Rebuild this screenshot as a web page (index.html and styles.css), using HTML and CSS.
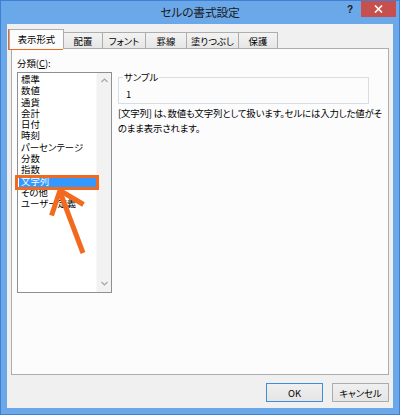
FILE: index.html
```html
<!DOCTYPE html>
<html lang="ja">
<head>
<meta charset="utf-8">
<title>セルの書式設定</title>
<link rel="stylesheet" href="styles.css">
</head>
<body>
<div class="window">
  <div class="titlebar">
    <div></div>
    <div class="title">セルの書式設定</div>
    <div class="controls">
      <span class="help">?</span>
      <span class="close"><svg width="9" height="8" viewBox="0 0 9 8"><path d="M1 0.5 L8 7.5 M8 0.5 L1 7.5" stroke="#fff" stroke-width="1.6" fill="none"/></svg></span>
    </div>
  </div>
  <div class="client">
    <div class="tabs">
      <div class="tab active t1">表示形式</div>
      <div class="tab t2">配置</div>
      <div class="tab t3">フォント</div>
      <div class="tab t4">罫線</div>
      <div class="tab t5">塗りつぶし</div>
      <div class="tab t6">保護</div>
    </div>
    <div class="panel">
      <div class="left">
        <div class="label">分類(<u>C</u>):</div>
        <div class="listbox">
          <ul class="items">
            <li>標準</li>
            <li>数値</li>
            <li>通貨</li>
            <li>会計</li>
            <li>日付</li>
            <li>時刻</li>
            <li>パーセンテージ</li>
            <li>分数</li>
            <li>指数</li>
            <li class="selected">文字列</li>
            <li>その他</li>
            <li>ユーザー定義</li>
          </ul>
          <div class="scrollbar">
            <svg width="7" height="5" viewBox="0 0 7 5"><path d="M0.5 4 L3.5 1 L6.5 4" stroke="#a6a6a6" stroke-width="1.2" fill="none"/></svg>
            <svg width="7" height="5" viewBox="0 0 7 5"><path d="M0.5 1 L3.5 4 L6.5 1" stroke="#a6a6a6" stroke-width="1.2" fill="none"/></svg>
          </div>
        </div>
      </div>
      <div class="right">
        <fieldset class="sample">
          <legend>サンプル</legend>
          <div class="sample-value">1</div>
        </fieldset>
        <p class="desc">[文字列] は、数値も文字列として扱います。セルには入力した値がそ<br>のまま表示されます。</p>
      </div>
    </div>
    <div class="buttons">
      <button class="btn default">OK</button>
      <button class="btn">キャンセル</button>
    </div>
  </div>
  <svg class="annot" width="400" height="415" viewBox="0 0 400 415">
    <rect x="9.5" y="30.5" width="52" height="18" fill="none" stroke="#f26a1e" stroke-width="3"/>
    <rect x="16.5" y="176.5" width="81" height="12" fill="none" stroke="#f26a1e" stroke-width="3"/>
    <path d="M60 192 L83 253" stroke="#f26a1e" stroke-width="5" fill="none"/>
    <path d="M51.5 215.5 L60 190.5 L83.5 204.5" stroke="#f26a1e" stroke-width="5" fill="none" stroke-linejoin="miter"/>
  </svg>
</div>
</body>
</html>
```
FILE: styles.css
```css
* { box-sizing: border-box; }
html, body { margin: 0; padding: 0; }
body {
  width: 400px;
  height: 415px;
  overflow: hidden;
  font-family: "Noto Sans CJK JP", "Noto Sans", sans-serif;
  font-feature-settings: "palt";
  font-size: 9.4px;
  color: #000;
}
.window {
  position: relative;
  width: 400px;
  height: 415px;
  background: #6ba8e9;
  border: 1px solid #3f80d2;
  display: flex;
  flex-direction: column;
}
.titlebar {
  height: 23px;
  display: grid;
  grid-template-columns: 1fr auto 1fr;
  align-items: start;
}
.title {
  font-size: 11.8px;
  line-height: 22px;
  color: #1a1a1a;
  letter-spacing: -0.2px;
}
.controls {
  display: flex;
  justify-content: flex-end;
  align-items: flex-start;
  margin-right: 3px;
}
.help {
  width: 12px;
  margin-right: 5px;
  margin-top: 2px;
  font-family: "Liberation Sans", sans-serif;
  font-weight: bold;
  font-size: 10px;
  line-height: 14px;
  text-align: center;
  color: #1b1b1b;
}
.close {
  width: 35px;
  height: 16px;
  background: #c7504e;
  display: flex;
  align-items: center;
  justify-content: center;
}
.client {
  margin: 0 6px 6px 6px;
  height: 384px;
  background: #f0f0f0;
  padding: 5px 4px 6px 4px;
  display: flex;
  flex-direction: column;
}
.tabs {
  display: flex;
  align-items: flex-end;
  height: 20px;
  margin-bottom: -1px;
  position: relative;
  z-index: 1;
}
.tab {
  height: 16px;
  margin-bottom: 1px;
  margin-left: -1px;
  border: 1px solid #adadad;
  border-bottom: none;
  background: linear-gradient(#f3f3f3, #e6e6e6);
  display: flex;
  align-items: center;
  justify-content: center;
  line-height: 14px;
  padding-top: 1px;
}
.tab.active {
  height: 20px;
  margin-bottom: 0;
  margin-left: -2px;
  background: #fcfcfc;
  padding-top: 0;
  padding-bottom: 2px;
}
.t1 { width: 55px; }
.t2 { width: 40px; margin-left: -1px; }
.t3 { width: 44px; }
.t4 { width: 42px; }
.t5 { width: 53px; }
.t6 { width: 40px; }
.panel {
  height: 327px;
  border: 1px solid #adadad;
  background: #fcfcfc;
  padding: 8px 5px;
  display: flex;
  gap: 6px;
}
.left {
  width: 95px;
  display: flex;
  flex-direction: column;
}
.label {
  line-height: 12px;
  margin-bottom: 3px;
}
.listbox {
  width: 95px;
  height: 221px;
  border: 1px solid #8c9096;
  background: #fff;
  display: flex;
}
.items {
  list-style: none;
  margin: 0;
  padding: 1px 0 0 0;
  flex: 1;
}
.items li {
  line-height: 11.3px;
  height: 11.3px;
  padding-left: 3px;
  white-space: nowrap;
}
.items li.selected {
  background: #3399ff;
  color: #fff;
  margin: 0 0 0 1px;
  padding-left: 2px;
}
.scrollbar {
  width: 15px;
  background: #f2f2f2;
  border-left: 1px solid #f8f8f8;
  display: flex;
  flex-direction: column;
  justify-content: space-between;
  align-items: center;
  padding: 5px 0 6px 0;
}
.right {
  width: 251px;
  margin-top: 15px;
}
.sample {
  margin: 0;
  padding: 0 4px 3px 4px;
  border: 1px solid #d7dde2;
  min-width: 0;
}
.sample legend {
  padding: 0 1px;
  line-height: 11px;
}
.sample-value {
  line-height: 12px;
  padding: 5px 0 0 3px;
}
.desc {
  margin: 2px 0 0 0;
  line-height: 14.5px;
  white-space: nowrap;
  letter-spacing: -0.15px;
}
.buttons {
  margin-top: 8px;
  display: flex;
  justify-content: flex-end;
  gap: 9px;
}
.btn {
  width: 57px;
  height: 19px;
  margin: 0;
  padding: 0;
  border: 1px solid #acacac;
  background: linear-gradient(#f0f0f0, #e5e5e5);
  font-family: "Noto Sans CJK JP", "Noto Sans", sans-serif;
  font-feature-settings: "palt";
  font-size: 9.4px;
  line-height: 16px;
  color: #000;
}
.btn.default {
  border-color: #3f8fd8;
}
.annot {
  position: absolute;
  left: -1px;
  top: -1px;
  pointer-events: none;
}
```
